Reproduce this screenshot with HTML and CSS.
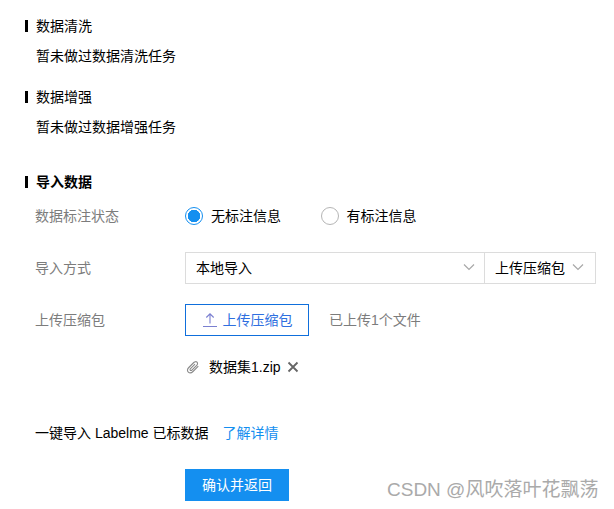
FILE: index.html
```html
<!DOCTYPE html>
<html lang="zh">
<head>
<meta charset="utf-8">
<title>导入数据</title>
<link rel="stylesheet" href="styles.css">
</head>
<body>
<main class="page">
  <section class="block">
    <h2 class="title">数据清洗</h2>
    <p class="note">暂未做过数据清洗任务</p>
  </section>
  <section class="block">
    <h2 class="title">数据增强</h2>
    <p class="note">暂未做过数据增强任务</p>
  </section>
  <section class="form">
    <h2 class="title title-strong">导入数据</h2>
    <div class="row row-radio">
      <span class="label">数据标注状态</span>
      <div class="radios">
        <span class="radio"><i class="dot dot-on"></i>无标注信息</span>
        <span class="radio"><i class="dot"></i>有标注信息</span>
      </div>
    </div>
    <div class="row row-select">
      <span class="label">导入方式</span>
      <div class="selects">
        <div class="select select-main">本地导入
          <svg class="chev" width="12" height="8" viewBox="0 0 12 8"><path d="M1 1.5 6 6.5 11 1.5" fill="none" stroke="#a8a8a8" stroke-width="1.2"/></svg>
        </div>
        <div class="select select-sub">上传压缩包
          <svg class="chev" width="12" height="8" viewBox="0 0 12 8"><path d="M1 1.5 6 6.5 11 1.5" fill="none" stroke="#a8a8a8" stroke-width="1.2"/></svg>
        </div>
      </div>
    </div>
    <div class="row row-upload">
      <span class="label">上传压缩包</span>
      <div class="upload">
        <button class="btn-outline" type="button">
          <svg width="16" height="16" viewBox="0 0 16 16"><path d="M8 11.5V2M4.3 5.5 8 1.8l3.7 3.7M1 14.5h14" fill="none" stroke="#7a7fd0" stroke-width="1.1"/></svg>
          上传压缩包
        </button>
        <span class="hint">已上传1个文件</span>
      </div>
    </div>
    <div class="file">
      <svg class="clip" width="14" height="14" viewBox="0 0 14 14"><path d="M12.3 6.2 7 11.5c-1.5 1.5-3.5 1.7-4.7.6C1 10.900 1.300 9 2.800 7.500L7.800 2.500c1-1 2.400-1.100 3.200-.3.800.8.700 2.100-.3 3.100L5.900 10.100c-.5.500-1.200.600-1.600.200-.4-.4-.3-1.100.2-1.600L9 4.200" fill="none" stroke="#8a8a8a" stroke-width="1.100"/></svg>
      <span class="file-name">数据集1.zip</span>
      <svg class="remove" width="12" height="12" viewBox="0 0 12 12"><path d="M1.500 1.500 10.500 10.500M10.500 1.500 1.500 10.500" stroke="#666" stroke-width="1.800"/></svg>
    </div>
  </section>
  <div class="labelme">一键导入 Labelme 已标数据<a class="link" href="#">了解详情</a></div>
  <button class="btn-primary" type="button">确认并返回</button>
</main>
<div class="watermark">CSDN @风吹落叶花飘荡</div>
</body>
</html>
```
FILE: styles.css
```css
* { box-sizing: border-box; }
html, body { margin: 0; height: 509px; overflow: hidden; background: #fff; }
body {
  position: relative;
  font-family: "Liberation Sans", "Noto Sans CJK SC", sans-serif;
  font-size: 14px;
  line-height: 20px;
  color: #000;
}
.page { padding: 17px 18px 0 25px; }
.block { margin-bottom: 25px; }
.title {
  margin: 3px 0;
  padding-left: 8px;
  border-left: 3px solid #000;
  font-size: 14px;
  font-weight: 400;
  line-height: 12px;
  height: 12px;
}
.title-strong { font-weight: 700; }
.note { margin: 14px 0 0 11px; }
.form { margin-top: 39px; }
.row { display: flex; align-items: center; }
.label { width: 160px; padding-left: 10px; color: #7c7c7c; flex: none; }
.row-radio { margin-top: 16px; height: 24px; }
.radios { display: flex; }
.radio { display: flex; align-items: center; width: 135.5px; }
.dot {
  width: 18px; height: 18px; margin-right: 8px;
  border: 1px solid #b5b5b5; border-radius: 50%; flex: none;
}
.dot-on { border-color: #148ff0; background: radial-gradient(circle, #148ff0 0 6px, #fff 6.500px); }
.row-select { margin-top: 24px; }
.selects { display: flex; height: 32px; width: 411px; border: 1px solid #dcdcdc; }
.select { display: flex; align-items: center; justify-content: space-between; padding: 0 9px 0 10px; }
.select-main { width: 299px; border-right: 1px solid #dcdcdc; }
.select-sub { flex: 1; padding-right: 11px; }
.chev { flex: none; margin-bottom: 2px; }
.row-upload { margin-top: 20px; }
.upload { display: flex; align-items: center; gap: 20px; }
.btn-outline {
  display: flex; align-items: center; justify-content: center; gap: 5px;
  width: 124px; height: 32px; padding: 0 0 0 1px;
  background: #fff; border: 1px solid #0f6fdc;
  font: inherit; color: #2f6fe0;
}
.btn-outline svg { margin-left: -1px; }
.hint { color: #7c7c7c; }
.file { display: flex; align-items: center; margin: 21px 0 0 161px; height: 20px; }
.clip { flex: none; }
.file-name { margin: 0 6px 0 9px; }
.labelme { margin-top: 46px; margin-left: 10px; }
.link { margin-left: 14px; color: #148ff0; text-decoration: none; }
.btn-primary {
  display: block; width: 104px; height: 32px; margin: 26px 0 0 160px; padding: 0;
  background: #148ff0; border: 0; color: #fff; font: inherit;
}
.watermark {
  position: absolute; left: 387px; top: 479px;
  font-size: 19px; line-height: 22px; color: #aaa; white-space: nowrap;
  font-family: "Liberation Sans", "Noto Sans CJK SC", sans-serif;
}
```
